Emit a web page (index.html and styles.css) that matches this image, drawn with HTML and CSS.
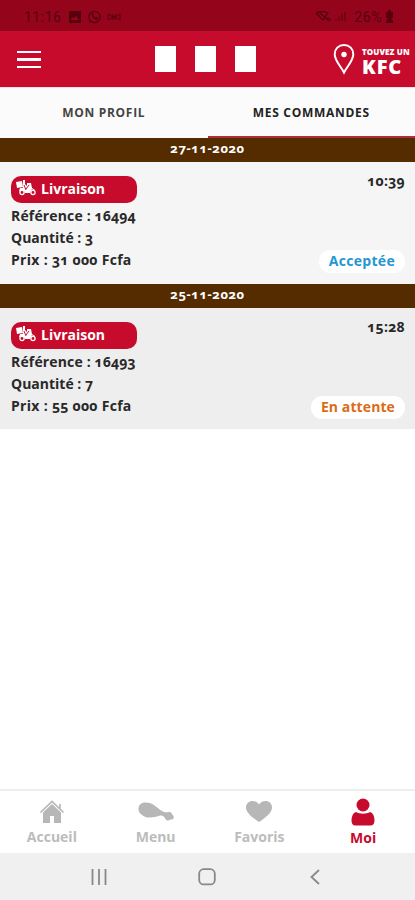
FILE: index.html
```html
<!DOCTYPE html>
<html lang="fr">
<head>
    <meta charset="UTF-8">
    <meta name="viewport" content="width=device-width, initial-scale=1">
    <title>Mes commandes</title>
    <link rel="stylesheet" href="styles.css">
</head>
<body>
    <div class="status-bar">
        <span class="status-time">11:16</span>
        <svg class="status-icons" width="54" height="14" viewBox="0 0 54 14">
            <path fill="currentColor" fill-rule="evenodd" d="M1 1h12v12H1zM3 10h8L8 6 6 8 4 7z"/>
            <circle cx="26.500" cy="7" r="5.600" fill="none" stroke="currentColor" stroke-width="1.400"/>
            <path d="M21 13l1-4M24 4c0 3 2 5 5 6l1-2-2-1-1 1-2-3 1-1-1-1z" fill="currentColor" stroke="currentColor" stroke-width=".6"/>
            <path d="M40 4l5 3-5 3zM52 4l-5 3 5 3zM44 4l4 6M48 4l-4 6" fill="none" stroke="currentColor"/>
        </svg>
        <svg class="status-signal" width="32" height="12" viewBox="0 0 32 12">
            <path d="M0 2q6-3 12 0L7 9zM3 1l10 9M12 6v4M14 10V7" fill="none" stroke="currentColor" stroke-width="1.300"/>
            <path d="M20 10V8M23 10V6M26 10V3M29 10V1" fill="none" stroke="currentColor"/>
        </svg>
        <span class="status-battery">26%</span>
        <svg class="status-charge" width="9" height="14" viewBox="0 0 9 14">
            <path d="M3 0h3v2h2v6H6l2 3v2H1v-2l2-3H1V2h2z" fill="currentColor"/>
        </svg>
    </div>

    <header class="header">
        <div class="burger"><span></span><span></span><span></span></div>
        <div class="stripes"><span></span><span></span><span></span></div>
        <div class="find">
            <svg width="22" height="32" viewBox="0 0 22 32">
                <path d="M11 2C5.500 2 1.700 6 1.700 11.200c0 6.500 6.300 12.300 9.300 18.300 3-6 9.300-11.800 9.300-18.300C20.300 6 16.500 2 11 2z" fill="none" stroke="#fff" stroke-width="2"/>
                <circle cx="11" cy="11.500" r="2.700" fill="#fff"/>
            </svg>
            <div class="find-text">
                <span class="find-small">TOUVEZ UN</span>
                <span class="find-big">KFC</span>
            </div>
        </div>
    </header>

    <div class="tabs">
        <div class="tab"><span>MON PROFIL</span></div>
        <div class="tab active"><span>MES COMMANDES</span></div>
    </div>

    <main class="orders">
        <div class="date">27-11-2020</div>
        <div class="order">
            <div class="details">
                <div class="type">
                    <svg width="20" height="16" viewBox="0 0 20 16">
                        <path d="M0 2l6-1 1 6-6 1zM7 0h2v4l2 2V3h4l1 5 3 2-1 1-2-2-2 4H9l-1-2H3l1-3h3z" fill="#fff"/>
                        <path d="M8 5l2 5M13 5l-3 4" stroke="#c70b2c" fill="none"/>
                        <circle cx="6" cy="12.500" r="2.100" fill="#c70b2c" stroke="#fff" stroke-width="1.300"/>
                        <circle cx="17" cy="12.500" r="2.100" fill="#c70b2c" stroke="#fff" stroke-width="1.300"/>
                    </svg>
                    <span>Livraison</span>
                </div>
                <p class="ref">Référence : 16494</p>
                <p>Quantité : 3</p>
                <p class="price">Prix : 31 000 Fcfa</p>
            </div>
            <div class="side">
                <span class="time">10:39</span>
                <span class="state accepted">Acceptée</span>
            </div>
        </div>

        <div class="date">25-11-2020</div>
        <div class="order pending">
            <div class="details">
                <div class="type">
                    <svg width="20" height="16" viewBox="0 0 20 16">
                        <path d="M0 2l6-1 1 6-6 1zM7 0h2v4l2 2V3h4l1 5 3 2-1 1-2-2-2 4H9l-1-2H3l1-3h3z" fill="#fff"/>
                        <path d="M8 5l2 5M13 5l-3 4" stroke="#c70b2c" fill="none"/>
                        <circle cx="6" cy="12.500" r="2.100" fill="#c70b2c" stroke="#fff" stroke-width="1.300"/>
                        <circle cx="17" cy="12.500" r="2.100" fill="#c70b2c" stroke="#fff" stroke-width="1.300"/>
                    </svg>
                    <span>Livraison</span>
                </div>
                <p class="ref">Référence : 16493</p>
                <p>Quantité : 7</p>
                <p class="price">Prix : 55 000 Fcfa</p>
            </div>
            <div class="side">
                <span class="time">15:28</span>
                <span class="state waiting">En attente</span>
            </div>
        </div>
    </main>

    <nav class="bottom-nav">
        <div class="nav-item">
            <svg width="26" height="26" viewBox="0 0 26 26" fill="#b7b7b7">
                <path d="M13 6l9 8.500V25h-7v-7h-4v7H4V14.500z"/>
                <path d="M1.500 14.500L13 3.500l11.500 11M21 10.500V6" fill="none" stroke="#b7b7b7" stroke-width="1.700"/>
            </svg>
            <span>Accueil</span>
        </div>
        <div class="nav-item">
            <svg width="36" height="26" viewBox="0 0 36 26" fill="#b7b7b7">
                <path d="M.5 10C1 5 6 3.500 12 5c6 2 8.500 7 14 9 3 1 4-.5 6.500.3 2 .7 1.300 2.500 3 3.700 1 2.500-1 4-3 3.500-1.500 1.300-4 1.500-5-.5-1-2-2.500-3.700-5-3.500-6 1.500-12 3.500-17 .5C2 16 0 13.500.5 10z"/>
            </svg>
            <span>Menu</span>
        </div>
        <div class="nav-item">
            <svg width="28" height="26" viewBox="0 0 28 26" fill="#b7b7b7">
                <path d="M14 24C8 20 1 15 1 9.500 1 5.500 4 3 7.500 3c3 0 5 1.300 6.500 3.500C15.500 4.300 17.500 3 20.500 3 24 3 27 5.500 27 9.500 27 15 20 20 14 24z"/>
            </svg>
            <span>Favoris</span>
        </div>
        <div class="nav-item current">
            <svg width="24" height="28" viewBox="0 0 24 28" fill="#c70b2c">
                <circle cx="12" cy="7" r="6.500"/>
                <path d="M5 14c4 2.300 10 2.300 14 0 3 1 4.500 4 4.500 8.500 0 3.500-1.500 5-4 5h-15c-2.500 0-4-1.500-4-5C.5 18 2 15 5 14z"/>
            </svg>
            <span>Moi</span>
        </div>
    </nav>

    <div class="system-bar">
        <svg width="16" height="16" viewBox="0 0 16 16"><path d="M1.500 0v16M8 0v16M14.500 0v16"/></svg>
        <svg class="home" width="18" height="18" viewBox="0 0 18 18"><rect x="1.200" y="1.200" width="15.600" height="15.200" rx="4.500"/></svg>
        <svg width="10" height="16" viewBox="0 0 10 16"><path d="M9 1L1.500 8 9 15"/></svg>
    </div>
</body>
</html>
```
FILE: styles.css
```css
* {
    box-sizing: border-box;
}
body {
    margin: 0;
    height: 900px;
    display: flex;
    flex-direction: column;
    font-family: "Open Sans", "Noto Sans", sans-serif;
    font-weight: bold;
    font-variant-numeric: oldstyle-nums;
    color: #292929;
    background-color: #fff;
    white-space: nowrap;
}
svg {
    flex: none;
    display: block;
}
p {
    margin: 0;
}

.status-bar {
    height: 31px;
    padding: 2px 21px 0 24px;
    display: flex;
    align-items: center;
    background-color: #94051b;
    color: #59000f;
    font-family: Roboto, sans-serif;
    font-size: 14px;
    font-weight: normal;
    font-variant-numeric: normal;
}
.status-time {
    width: 44px;
    letter-spacing: 0.5px;
}
.status-signal {
    margin-left: auto;
    margin-right: 6px;
}
.status-battery {
    letter-spacing: 0.6px;
    margin-right: 3px;
}

.header {
    height: 56px;
    display: flex;
    align-items: center;
    justify-content: space-between;
    padding: 0 4px 0 17px;
    background-color: #c70b2c;
    color: #fff;
}
.burger {
    width: 138px;
    display: flex;
    flex-direction: column;
    gap: 5px;
    padding-top: 1px;
}
.burger span {
    width: 24px;
    height: 2.5px;
    background-color: #fff;
}
.stripes {
    display: flex;
    gap: 19px;
}
.stripes span {
    width: 21px;
    height: 26px;
    background-color: #fff;
}
.find {
    margin-left: auto;
    display: flex;
    align-items: center;
    gap: 7px;
}
.find-text {
    width: 49px;
    display: flex;
    flex-direction: column;
    padding-top: 5px;
}
.find-small {
    font-size: 8px;
    font-weight: 800;
    line-height: 10px;
    letter-spacing: 0.1px;
}
.find-big {
    font-size: 20px;
    font-weight: 800;
    line-height: 19px;
    letter-spacing: 0.9px;
}

.tabs {
    height: 51px;
    display: flex;
    background-color: #fbfbfb;
    border-top: 1px solid #f9dfe3;
}
.tab {
    flex: 1;
    display: flex;
    align-items: center;
    justify-content: center;
    padding-bottom: 2px;
    font-size: 12px;
    letter-spacing: 0.7px;
    color: #444;
}
.tab.active {
    color: #222;
    border-bottom: 2px solid #ad2f43;
    padding-bottom: 0;
}

.date {
    height: 24px;
    line-height: 21px;
    text-align: center;
    font-size: 13px;
    letter-spacing: 0.6px;
    background-color: #552b00;
    color: #fff;
}
.order {
    height: 122px;
    padding: 14px 10px 0 11px;
    display: flex;
    justify-content: space-between;
    background-color: #f5f5f5;
    font-size: 14px;
}
.order.pending {
    background-color: #eee;
    height: 121px;
}
.details p {
    line-height: 22px;
}
.details .ref {
    letter-spacing: 0.15px;
}
.details .price {
    letter-spacing: 0.3px;
}
.type {
    width: 126px;
    height: 27px;
    margin-bottom: 2px;
    padding: 0 0 3px 5px;
    display: flex;
    align-items: center;
    gap: 5px;
    border-radius: 10px;
    background-color: #c70b2c;
    color: #fff;
}
.side {
    display: flex;
    flex-direction: column;
    align-items: flex-end;
}
.time {
    line-height: 18px;
    margin-top: -4px;
    letter-spacing: 0.3px;
}
.state {
    height: 23px;
    margin-top: 60px;
    padding: 0 10px;
    line-height: 21px;
    border-radius: 11px;
    background-color: #fff;
}
.accepted {
    color: #2497d3;
    letter-spacing: 0.3px;
}
.waiting {
    color: #dd6b16;
    letter-spacing: 0.1px;
}

.bottom-nav {
    height: 64px;
    margin-top: auto;
    display: flex;
    border-top: 2px solid #eee;
    background-color: #fff;
}
.nav-item {
    flex: 1;
    padding-top: 7px;
    display: flex;
    flex-direction: column;
    align-items: center;
    font-size: 14px;
    line-height: 18px;
    color: #bcbcbc;
}
.nav-item span {
    margin-top: 4px;
}
.nav-item.current span {
    margin-top: 3px;
}
.nav-item.current {
    color: #c70b2c;
}
.system-bar {
    height: 47px;
    padding: 1px 95px 0 91px;
    display: flex;
    align-items: center;
    justify-content: space-between;
    background-color: #f0f0f0;
}
.system-bar svg {
    fill: none;
    stroke: #888;
    stroke-width: 1.8;
}
.system-bar .home {
    margin-right: 4px;
}
```
